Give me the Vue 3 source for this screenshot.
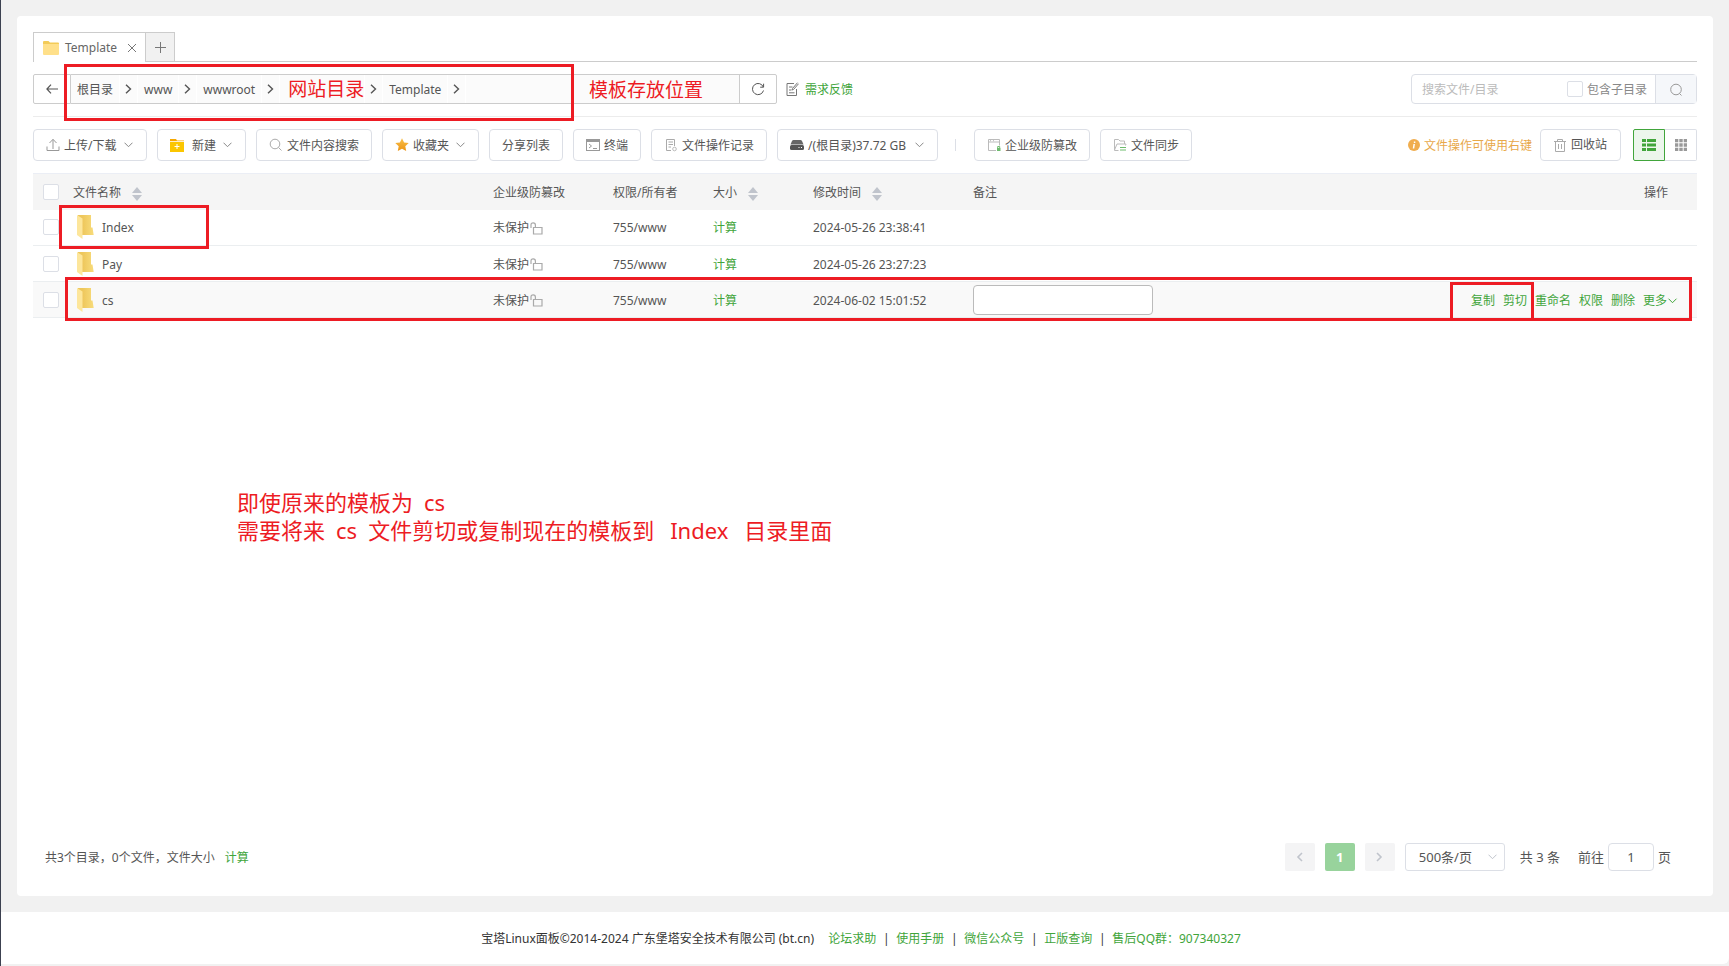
<script setup>
import { ref } from 'vue'

const crumbs = ref([
  { name: '根目录' },
  { name: 'www' },
  { name: 'wwwroot' },
  { name: '网站目录', marked: true },
  { name: 'Template' },
])

const rows = ref([
  { name: 'Index', time: '2024-05-26 23:38:41', active: false },
  { name: 'Pay', time: '2024-05-26 23:27:23', active: false },
  { name: 'cs', time: '2024-06-02 15:01:52', active: true },
])

const footerLinks = ['论坛求助', '使用手册', '微信公众号', '正版查询', '售后QQ群：907340327']
</script>

<template>
  <div class="page">
    <main class="card">
      <div class="tabs">
        <div class="tab">
          <svg class="tab-folder" width="16" height="14" viewBox="0 0 16 14">
            <path d="M1 0h4.5l1.5 1.5H15a1 1 0 0 1 1 1V12H0V1a1 1 0 0 1 1-1z" fill="#f3cb58" />
            <path d="M0 3h16v10a1 1 0 0 1-1 1H1a1 1 0 0 1-1-1z" fill="#ffe08a" />
          </svg>
          <span class="tab-name">Template</span>
          <button class="icon-btn" aria-label="关闭">
            <svg width="10" height="10" viewBox="0 0 10 10"><path d="M1 1l8 8M9 1L1 9" stroke="#777" fill="none" /></svg>
          </button>
        </div>
        <button class="tab-add" aria-label="新标签">
          <svg width="11" height="11" viewBox="0 0 11 11"><path d="M5.5 0v11M0 5.5h11" stroke="#777" fill="none" /></svg>
        </button>
      </div>

      <div class="address">
        <button class="back" aria-label="返回">
          <svg width="12" height="10" viewBox="0 0 12 10"><path d="M5 .7L.9 5 5 9.300M1 5h11" stroke="#555" stroke-width="1.200" fill="none" /></svg>
        </button>
        <nav class="path">
          <template v-for="c in crumbs" :key="c.name">
            <a href="#" class="crumb" :class="{ marked: c.marked }">{{ c.name }}</a>
            <span class="crumb-sep">
              <svg width="7" height="10" viewBox="0 0 7 10"><path d="M1 .7L5.500 5 1 9.300" stroke="#555" stroke-width="1.400" fill="none" /></svg>
            </span>
          </template>
        </nav>
        <button class="refresh" aria-label="刷新">
          <svg width="14" height="14" viewBox="0 0 14 14"><path d="M12.300 5A5.600 5.600 0 1 0 12.500 8.500M12.600 1.700v3.500H9.200" stroke="#555" fill="none" /></svg>
        </button>
        <a href="#" class="feedback">
          <svg width="13" height="14" viewBox="0 0 13 14"><path d="M8 1.500H1v12h9.500V7M3 5h3.500M3 8h2.500M3 10.800h5.500M11.500.7L6.500 6.500 6.200 8l1.400-.6 5-5.700" stroke="#777" fill="none" /></svg>
          <span>需求反馈</span>
        </a>
        <div class="search">
          <input type="text" class="search-input" placeholder="搜索文件/目录" aria-label="搜索文件/目录" />
          <label class="sub"><input type="checkbox" class="box" /><span>包含子目录</span></label>
          <button class="search-btn" aria-label="搜索">
            <svg width="12" height="13" viewBox="0 0 12 13"><circle cx="6" cy="6.500" r="5.300" stroke="#999" fill="none" /><path d="M9.500 10.500l2 2" stroke="#999" /></svg>
          </button>
        </div>
      </div>

      <div class="toolbar">
        <button class="btn upload">
          <svg width="14" height="14" viewBox="0 0 14 14"><path d="M7 11V1.500M3.500 5L7 1.300 10.500 5M1 8.500v4h12v-4" stroke="#999" fill="none" /></svg>
          <span>上传/下载</span>
          <svg class="caret" width="9" height="6" viewBox="0 0 9 6"><path d="M.5.700l4 4 4-4" stroke="#888" fill="none" /></svg>
        </button>
        <button class="btn new">
          <svg width="14" height="14" viewBox="0 0 14 14"><path d="M0 1h6l1 1.500h7V14H0z" fill="#f7a800" /><path d="M0 4h14v10H0z" fill="#fbc600" /><path d="M0 3.500h14" stroke="#fff" stroke-width=".8" /><path d="M7 6v5M4.500 8.500h5" stroke="#fff" /></svg>
          <span>新建</span>
          <svg class="caret" width="9" height="6" viewBox="0 0 9 6"><path d="M.5.700l4 4 4-4" stroke="#888" fill="none" /></svg>
        </button>
        <button class="btn">
          <svg width="14" height="14" viewBox="0 0 14 14"><circle cx="6" cy="6" r="4.800" stroke="#aaa" fill="none" /><path d="M9.500 9.500l3 3" stroke="#aaa" /></svg>
          <span>文件内容搜索</span>
        </button>
        <button class="btn">
          <svg width="14" height="14" viewBox="0 0 14 14">
            <defs><linearGradient id="star" x1="0" y1="0" x2="0" y2="1"><stop offset="0" stop-color="#f8c04c" /><stop offset="1" stop-color="#ec9413" /></linearGradient></defs>
            <path d="M7 .3l2.100 4.200 4.600.6-3.400 3.200.9 4.800L7 10.800l-4.200 2.300.9-4.800L.3 5.100l4.600-.6z" fill="url(#star)" />
          </svg>
          <span>收藏夹</span>
          <svg class="caret" width="9" height="6" viewBox="0 0 9 6"><path d="M.5.700l4 4 4-4" stroke="#888" fill="none" /></svg>
        </button>
        <button class="btn"><span>分享列表</span></button>
        <button class="btn">
          <svg width="14" height="14" viewBox="0 0 14 14"><rect x=".5" y="1.500" width="13" height="11" stroke="#999" fill="none" /><path d="M0 1h14v3H0z" fill="#999" /><path d="M3 6l2.500 2L3 10M7 10.500h4" stroke="#999" fill="none" /></svg>
          <span>终端</span>
        </button>
        <button class="btn">
          <svg width="14" height="14" viewBox="0 0 14 14"><path d="M7 12.500H2.500v-11h8v6.500M4.500 4h4.500M4.500 6.500h4.500M4.500 9H7" stroke="#aaa" fill="none" /><circle cx="10.500" cy="11" r="1.800" stroke="#bbb" fill="none" /></svg>
          <span>文件操作记录</span>
        </button>
        <button class="btn disk">
          <svg width="14" height="14" viewBox="0 0 14 14"><path d="M3.500 2h7q1 0 1.500 1l1.500 3.500H.5L2 3q.5-1 1.500-1z" fill="#666" /><rect y="7" width="14" height="5" rx="1.500" fill="#555" /><path d="M8.500 9.500h1M11 9.500h1" stroke="#fff" /></svg>
          <span>/(根目录)37.72 GB</span>
          <svg class="caret" width="9" height="6" viewBox="0 0 9 6"><path d="M.5.700l4 4 4-4" stroke="#888" fill="none" /></svg>
        </button>
        <i class="divider"></i>
        <button class="btn">
          <svg width="14" height="14" viewBox="0 0 14 14"><path d="M9 12.500H1.500v-11h11v6M1.500 4h11M3 2.700h1M6 2.700h1" stroke="#bbb" fill="none" /><path d="M10 10h3.500v3H10z" fill="#6dbb6d" /><path d="M10.700 10V8.500h2V10" stroke="#6dbb6d" fill="none" /></svg>
          <span>企业级防篡改</span>
        </button>
        <button class="btn">
          <svg width="14" height="14" viewBox="0 0 14 14"><path d="M5.500 12.500h-4v-11h4L7 3h4.500v3M1.500 12L4 6h9l-.5 1.500" stroke="#bbb" fill="none" /><path d="M7 9.500h6M7 12h6" stroke="#6dbb6d" /></svg>
          <span>文件同步</span>
        </button>
        <div class="right">
          <span class="tip">
            <svg width="12" height="12" viewBox="0 0 12 12"><circle cx="6" cy="6" r="6" fill="#f0ad4e" /><path d="M6.600 2.500v1.400M6.200 5L5.500 9.500" stroke="#fff" stroke-width="1.500" /></svg>
            <span>文件操作可使用右键</span>
          </span>
          <button class="btn trash">
            <svg width="14" height="14" viewBox="0 0 14 14"><path d="M1 3.500h12M4.500 3.500v-2h5v2M2.500 3.500v10h9v-10M5.500 6v5M8.500 6v5" stroke="#aaa" fill="none" /></svg>
            回收站
          </button>
          <div class="views">
            <button class="view on" aria-label="列表">
              <svg width="14" height="12" viewBox="0 0 14 12"><path d="M0 0h4v3H0zM5 0h9v3H5zM0 4.500h4v3H0zM5 4.500h9v3H5zM0 9h4v3H0zM5 9h9v3H5z" fill="#41a53b" /></svg>
            </button>
            <button class="view" aria-label="网格">
              <svg width="12" height="12" viewBox="0 0 12 12"><path d="M0 0h3.300v3.300H0zM4.300 0h3.400v3.300H4.300zM8.700 0H12v3.300H8.700zM0 4.300h3.300v3.400H0zM4.300 4.300h3.400v3.400H4.300zM8.700 4.300H12v3.400H8.700zM0 8.700h3.300V12H0zM4.300 8.700h3.400V12H4.300zM8.700 8.700H12V12H8.700z" fill="#999" /></svg>
            </button>
          </div>
        </div>
      </div>

      <table class="files">
        <thead>
          <tr>
            <th class="c-check"><input type="checkbox" class="box" aria-label="全选" /></th>
            <th>文件名称 <span class="sort"></span></th>
            <th class="c-tamper">企业级防篡改</th>
            <th class="c-perm">权限/所有者</th>
            <th class="c-size">大小 <span class="sort"></span></th>
            <th class="c-time">修改时间 <span class="sort"></span></th>
            <th class="c-note">备注</th>
            <th class="c-ops">操作</th>
          </tr>
        </thead>
        <tbody>
          <tr v-for="r in rows" :key="r.name" :class="{ active: r.active }">
            <td class="c-check"><input type="checkbox" class="box" :aria-label="r.name" /></td>
            <td class="c-name">
              <div class="name">
                <svg width="17" height="24" viewBox="0 0 17 24">
                  <defs><linearGradient id="back" x1="0" y1="0" x2="1" y2="0"><stop offset="0.3" stop-color="#eec75c" /><stop offset="1" stop-color="#f8dc7c" /></linearGradient></defs>
                  <path d="M1 0h13v12.500h1.500l1.200 7.500H1z" fill="url(#back)" />
                  <path d="M0 0l5.500 3.500V24L0 20z" fill="#fde69b" />
                </svg>
                <span>{{ r.name }}</span>
              </div>
            </td>
            <td>
              <div class="guard">未保护<svg width="13" height="13" viewBox="0 0 13 13"><path d="M1 6V3a2.200 2.200 0 0 1 4.400 0v2.500M3.500 5.500h8.500v6.500H3.500z" stroke="#aaa" stroke-width="1.200" fill="none" /></svg></div>
            </td>
            <td>755/www</td>
            <td><a href="#">计算</a></td>
            <td>{{ r.time }}</td>
            <td class="c-note"><input v-if="r.active" type="text" class="note" aria-label="备注" /></td>
            <td class="ops">
              <div v-if="r.active" class="actions">
                <a href="#">复制</a><a href="#">剪切</a><a href="#">重命名</a><a href="#">权限</a><a href="#">删除</a>
                <a href="#" class="more">更多<svg width="11" height="6" viewBox="0 0 11 6"><path d="M1.500.700l4 4 4-4" stroke="#41a53b" fill="none" /></svg></a>
              </div>
            </td>
          </tr>
        </tbody>
      </table>

      <div class="bottom">
        <div class="summary">共3个目录，0个文件，文件大小<a href="#">计算</a></div>
        <div class="pager">
          <button class="pg" aria-label="上一页"><svg width="7" height="10" viewBox="0 0 7 10"><path d="M6 1L2 5l4 4" stroke="#c0c4cc" stroke-width="1.600" fill="none" /></svg></button>
          <button class="pg current">1</button>
          <button class="pg" aria-label="下一页"><svg width="7" height="10" viewBox="0 0 7 10"><path d="M1 1l4 4-4 4" stroke="#c0c4cc" stroke-width="1.600" fill="none" /></svg></button>
          <div class="size">
            <select aria-label="每页条数"><option>500条/页</option></select>
            <svg width="9" height="6" viewBox="0 0 9 6"><path d="M.5.700l4 4 4-4" stroke="#c0c4cc" fill="none" /></svg>
          </div>
          <span class="total">共 3 条</span>
          <label class="goto">前往<input type="text" value="1" />页</label>
        </div>
      </div>
    </main>

    <footer class="foot">
      <span class="copy">宝塔Linux面板©2014-2024 广东堡塔安全技术有限公司 (bt.cn)</span>
      <template v-for="(l, i) in footerLinks" :key="l">
        <i v-if="i > 0" class="bar">|</i>
        <a href="#">{{ l }}</a>
      </template>
    </footer>

    <div class="frame frame-path"></div>
    <div class="frame frame-index"></div>
    <div class="frame frame-cs"></div>
    <div class="frame frame-copy"></div>
    <div class="remark place">模板存放位置</div>
    <div class="remark hint">
      <p><span>即使原来的模板为</span><span>cs</span></p>
      <p><span>需要将来</span><span>cs</span><span>文件剪切或复制现在的模板到</span><span class="wide">Index</span><span>目录里面</span></p>
    </div>
  </div>
</template>

<style>
html,
body {
  margin: 0;
  background: #f1f1f1;
}
</style>

<style scoped>
.page {
  position: relative;
  display: flex;
  flex-direction: column;
  box-sizing: border-box;
  min-height: 100vh;
  padding-bottom: 2px;
  border-left: 1px solid #3c4150;
  background: #f1f1f1;
  color: #555;
  font: 12px/18px "Noto Sans", "Noto Sans CJK SC", sans-serif;
}
.page *,
.page *::before,
.page *::after {
  box-sizing: border-box;
}
button,
input,
select {
  margin: 0;
  padding: 0;
  font: inherit;
  color: inherit;
  background: none;
  border: 0;
}
a {
  color: #41a53b;
  text-decoration: none;
}
svg {
  display: block;
  flex: none;
}
.card {
  flex: 1;
  display: flex;
  flex-direction: column;
  margin: 16px;
  padding: 16px 16px 25px;
  background: #fff;
  border-radius: 4px;
}
.box {
  appearance: none;
  flex: none;
  display: block;
  width: 16px;
  height: 16px;
  background: #fff;
  border: 1px solid #dcdfe6;
  border-radius: 2px;
}

/* tabs */
.tabs {
  display: flex;
  height: 30px;
  border-bottom: 1px solid #ccc;
}
.tab {
  display: flex;
  align-items: center;
  height: 30px;
  padding: 0 8px 0 9px;
  background: #fff;
  border: 1px solid #ccc;
  border-width: 1px 1px 0;
}
.tab-name {
  min-width: 52px;
  margin: 0 10px 0 6px;
  color: #666;
}
.tab-add {
  display: flex;
  align-items: center;
  justify-content: center;
  width: 29px;
  height: 29px;
  background: #f1f1f1;
  border: 1px solid #ccc;
  border-width: 1px 1px 0 0;
}

/* address bar */
.address {
  display: flex;
  align-items: center;
  padding: 12px 0;
  border-bottom: 1px solid #ececec;
}
.back,
.refresh {
  display: flex;
  align-items: center;
  justify-content: center;
  width: 38px;
  height: 30px;
  border: 1px solid #ccc;
}
.back {
  border-radius: 2px 0 0 2px;
}
.refresh {
  border-radius: 0 2px 2px 0;
}
.path {
  display: flex;
  flex: 0 1 669px;
  height: 30px;
  margin-right: -1px;
  background: #fbfbfb;
  border: 1px solid #ccc;
  border-width: 1px 0;
}
.crumb,
.crumb-sep {
  display: flex;
  align-items: center;
  border-right: 1px solid #fff;
}
.crumb {
  padding: 2px 6px 0;
  color: #555;
}
.crumb.marked {
  padding: 0 0 0 8px;
  font-size: 19px;
  color: #ed1c24;
}
.crumb-sep {
  justify-content: center;
  width: 18px;
}
.feedback {
  display: flex;
  align-items: center;
  gap: 6px;
  margin-left: 9px;
}
.feedback span,
.sub span,
.tip span,
.btn span {
  padding-top: 2px;
}
.search {
  display: flex;
  align-items: center;
  width: 286px;
  height: 30px;
  margin-left: auto;
  border: 1px solid #dcdfe6;
  border-radius: 4px;
}
.search-input {
  flex: 1;
  min-width: 0;
  padding: 2px 0 0 10px;
}
.search-input::placeholder {
  color: #bbb;
}
.sub {
  display: flex;
  align-items: center;
  gap: 4px;
  margin-right: 8px;
  color: #888;
}
.search-btn {
  display: flex;
  align-items: center;
  justify-content: center;
  width: 41px;
  height: 28px;
  background: #f5f7fa;
  border-left: 1px solid #dcdfe6;
}

/* toolbar */
.toolbar {
  display: flex;
  align-items: center;
  gap: 10px;
  padding: 12px 0;
}
.btn {
  display: flex;
  align-items: center;
  gap: 4px;
  height: 32px;
  padding: 0 12px;
  white-space: nowrap;
  border: 1px solid #dcdfe6;
  border-radius: 4px;
}
.caret {
  margin: 0 1px 0 3px;
}
.upload {
  min-width: 114px;
}
.new span {
  margin-left: 4px;
}
.disk {
  min-width: 161px;
}
.upload .caret,
.disk .caret {
  margin-left: auto;
}
.divider {
  width: 1px;
  height: 12px;
  margin: 0 8px 0 7px;
  background: #dcdfe6;
}
.right {
  display: flex;
  align-items: center;
  margin-left: auto;
}
.tip {
  display: flex;
  align-items: center;
  gap: 4px;
  margin-right: 8px;
  color: #e8a84a;
  white-space: nowrap;
}
.trash {
  width: 81px;
}
.views {
  display: flex;
  margin-left: 12px;
}
.view {
  display: flex;
  align-items: center;
  justify-content: center;
  width: 32px;
  height: 32px;
  border: 1px solid #dcdfe6;
  border-left: 0;
  border-radius: 0 2px 2px 0;
}
.view.on {
  background: #ecf6ec;
  border: 1px solid #41a53b;
  border-radius: 2px 0 0 2px;
}

/* file table */
.files {
  width: 100%;
  table-layout: fixed;
  border-collapse: collapse;
}
th {
  height: 36px;
  padding: 2px 10px 0;
  font-weight: 400;
  text-align: left;
  background: #f5f5f5;
  border-top: 1px solid #ebeef5;
}
td {
  height: 36px;
  padding: 2px 10px 0;
  border-bottom: 1px solid #ebeef0;
}
.active td {
  background: #f9f9f9;
}
.c-check {
  width: 30px;
  padding: 0 0 0 10px;
}
.c-tamper {
  width: 120px;
}
.c-perm,
.c-size {
  width: 100px;
}
.c-time {
  width: 160px;
}
.c-note {
  width: 200px;
}
td.c-note,
td.c-name {
  padding-top: 0;
}
.c-ops {
  width: 534px;
  padding-right: 29px;
  text-align: right;
}
.sort {
  display: inline-flex;
  flex-direction: column;
  gap: 2px;
  margin-left: 8px;
  vertical-align: middle;
}
.sort::before,
.sort::after {
  content: "";
  border: 5px solid transparent;
}
.sort::before {
  border-top: 0;
  border-bottom: 6px solid #c0c4cc;
}
.sort::after {
  border-bottom: 0;
  border-top: 6px solid #c0c4cc;
}
.name {
  display: flex;
  align-items: center;
  gap: 8px;
  padding-left: 4px;
}
.name span {
  padding-top: 2px;
}
.guard {
  display: flex;
  align-items: center;
  gap: 1px;
}
.note {
  display: block;
  width: 180px;
  height: 30px;
  padding: 0 8px;
  background: #fff;
  border: 1px solid #bbb;
  border-radius: 4px;
}
td.ops {
  padding-right: 19px;
}
.actions {
  display: flex;
  justify-content: flex-end;
  gap: 8px;
}
.more {
  display: flex;
  align-items: center;
}

/* summary and pager */
.bottom {
  display: flex;
  align-items: center;
  justify-content: space-between;
  margin-top: auto;
  padding: 0 26px 0 12px;
}
.summary {
  padding-top: 2px;
}
.summary a {
  margin-left: 10px;
}
.pager {
  display: flex;
  align-items: center;
  gap: 10px;
  font-size: 13px;
}
.pg {
  display: flex;
  align-items: center;
  justify-content: center;
  width: 30px;
  height: 28px;
  background: #f4f4f5;
  border-radius: 2px;
}
.current {
  background: #98d39c;
  color: #fff;
  font-weight: 700;
}
.size {
  display: flex;
  align-items: center;
  width: 100px;
  height: 28px;
  padding-right: 7px;
  border: 1px solid #dcdfe6;
  border-radius: 3px;
}
.size select {
  appearance: none;
  flex: 1;
  min-width: 0;
  padding-left: 13px;
}
.total {
  margin: 0 8px 0 5px;
}
.goto {
  display: flex;
  align-items: center;
  gap: 4px;
}
.goto input {
  width: 46px;
  height: 28px;
  text-align: center;
  border: 1px solid #dcdfe6;
  border-radius: 4px;
}

/* footer */
.foot {
  display: flex;
  align-items: center;
  justify-content: center;
  height: 52px;
  padding: 2px 8px 0 0;
  background: #fff;
  border-radius: 0 0 6px 0;
  color: #333;
}
.copy {
  min-width: 339px;
  margin-right: 8px;
}
.bar {
  width: 20px;
  font-style: normal;
  text-align: center;
}

/* red marks over the page */
.frame {
  position: absolute;
  border: 3px solid #ed1c24;
  pointer-events: none;
}
.frame-path {
  left: 63px;
  top: 64px;
  width: 510px;
  height: 57px;
}
.frame-index {
  left: 58px;
  top: 205px;
  width: 150px;
  height: 44px;
}
.frame-cs {
  left: 64px;
  right: 37px;
  top: 277px;
  height: 44px;
}
.frame-copy {
  right: 195px;
  top: 282px;
  width: 84px;
  height: 39px;
}
.remark {
  position: absolute;
  color: #ed1c24;
  white-space: nowrap;
  pointer-events: none;
}
.place {
  left: 588px;
  top: 76px;
  font-size: 19px;
  line-height: 28px;
}
.hint {
  left: 236px;
  top: 488px;
  font-size: 22px;
  line-height: 28px;
}
.hint p {
  display: flex;
  gap: 11px;
  margin: 0;
}
.hint .wide {
  margin: 0 5px;
}
</style>
